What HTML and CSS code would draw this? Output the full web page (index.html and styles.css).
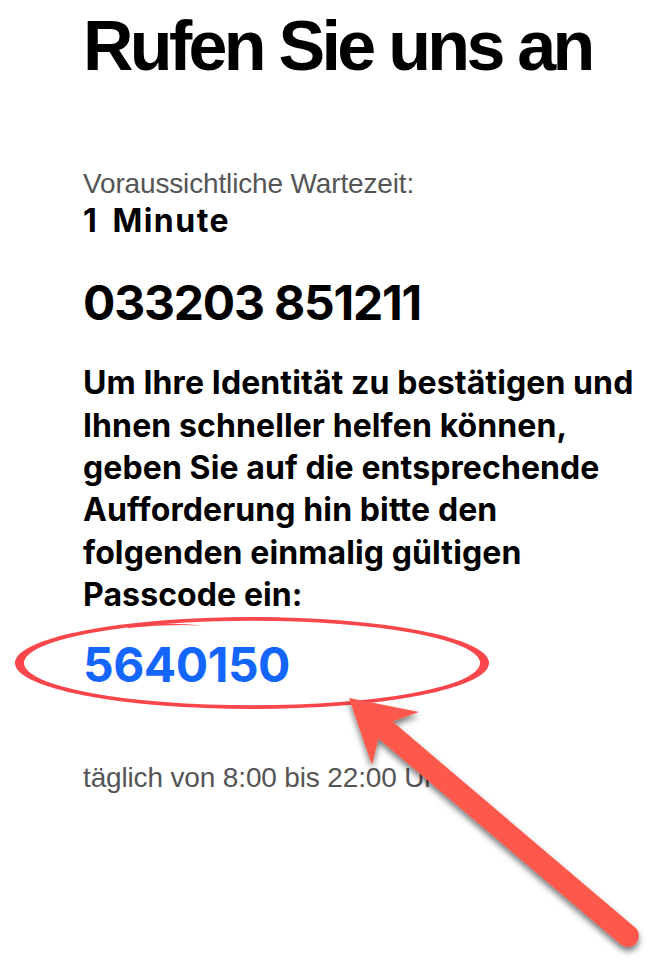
FILE: index.html
```html
<!DOCTYPE html>
<html lang="de">
  <head>
    <meta charset="UTF-8" />
    <meta name="viewport" content="width=device-width, initial-scale=1.0" />
    <title>Rufen Sie uns an</title>
    <link rel="stylesheet" href="styles.css">
  </head>
  <body>
    <main class="call">
      <h1 class="call-title">Rufen Sie uns an</h1>

      <p class="muted wait-label">Voraussichtliche Wartezeit:</p>
      <p class="wait-value">1 Minute</p>

      <p class="phone">033203 851211</p>

      <p class="verify">
        Um Ihre Identität zu bestätigen und<br>
        Ihnen schneller helfen können,<br>
        geben Sie auf die entsprechende<br>
        Aufforderung hin bitte den<br>
        folgenden einmalig gültigen<br>
        Passcode ein:
      </p>
      <p class="passcode">5640150</p>

      <p class="muted hours">täglich von 8:00 bis 22:00 Uhr</p>
    </main>

    <!-- hand-drawn markup on top of the page -->
    <svg class="markup" width="662" height="964" viewBox="0 0 662 964">
      <defs>
        <filter id="arrow-shadow" x="-20%" y="-20%" width="140%" height="140%">
          <feDropShadow dx="0" dy="4" stdDeviation="3" flood-color="#000" flood-opacity="0.55" />
        </filter>
      </defs>
      <!-- loop around the passcode -->
      <path class="loop"
        fill-rule="evenodd"
        d="M15,663 A237,46 0 1 0 489,663 A237,46 0 1 0 15,663 Z
           M24,663 A228,42.3 0 1 0 480,663 A228,42.3 0 1 0 24,663 Z" />
      <path class="loop" d="M128,626.5 Q165,621.5 203,625.5 Q165,624 128,628 Z" />
      <!-- arrow -->
      <path class="arrow" filter="url(#arrow-shadow)"
        d="M349,698 L419,712 L392.6,721.6 L635.1,927.6 A11,11 0 0 1 620.9,944.4 L378.4,738.4 L372,765 Z" />
    </svg>
  </body>
</html>
```

FILE: styles.css
```css
body {
  margin: 0;
  padding: 0;
  background-color: #fff;
  color: #000;
  font-family: "Liberation Sans", Arial, sans-serif;
}

.call {
  padding: 0 20px 0 83px;
}

.call p {
  margin: 0;
}

.call-title {
  margin: 11px 0 0 0;
  font-size: 70px;
  line-height: 70px;
  font-weight: bold;
  letter-spacing: -3.7px;
}

.muted {
  color: #555;
  font-size: 28px;
  line-height: 34px;
  letter-spacing: -0.15px;
}

.wait-label {
  margin-top: 85.5px !important;
}

.wait-value,
.phone,
.verify,
.passcode {
  font-family: Inter, "Noto Sans", sans-serif;
  font-weight: 700;
}

.wait-value {
  margin-top: 2.1px !important;
  font-size: 32px;
  line-height: 36px;
  letter-spacing: 1.5px;
  word-spacing: 5px;
}

.phone {
  margin-top: 36.1px !important;
  font-size: 48px;
  line-height: 56px;
  letter-spacing: -1.2px;
}

.verify {
  margin-top: 31.7px !important;
  font-size: 32px;
  line-height: 42.3px;
  letter-spacing: 0.1px;
  white-space: nowrap;
}

.passcode {
  margin-top: 20.5px !important;
  font-size: 48px;
  line-height: 56px;
  letter-spacing: -0.5px;
  color: #1466fb;
}

.hours {
  margin-top: 68.75px !important;
}

.markup {
  position: absolute;
  top: 0;
  left: 0;
  pointer-events: none;
}

.loop {
  fill: #f8464b;
}

.arrow {
  fill: #fd584b;
}
```
